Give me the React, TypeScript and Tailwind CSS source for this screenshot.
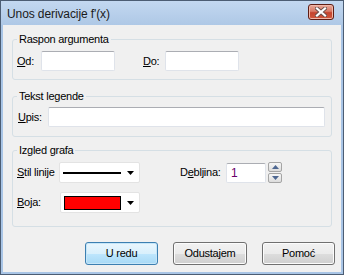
import React from 'react';

const inputCls =
  'h-[20px] bg-white border border-[#dfe3ea] border-t-[#abadb3] rounded-[2px] outline-none px-[4px] text-[11px]';

function Mn({ children }: { children: React.ReactNode }) {
  return <span className="underline underline-offset-[1px]">{children}</span>;
}

function Arrow() {
  return (
    <svg width="7" height="4" viewBox="0 0 7 4" className="shrink-0">
      <path d="M0 0h7L3.5 4z" fill="#000" />
    </svg>
  );
}

function Group({ title, h, children, className = '' }: { title: string; h: string; children: React.ReactNode; className?: string }) {
  return (
    <fieldset className={`ml-[9px] w-[320px] ${h} border border-[#d5dfe5] rounded-[3px] px-[4px] pt-[5px] ${className}`}>
      <legend className="px-[2px] leading-[14px]">{title}</legend>
      {children}
    </fieldset>
  );
}

function Button({ label, primary = false, w = 'w-[73px]' }: { label: string; primary?: boolean; w?: string }) {
  return (
    <button
      className={`${w} h-[23px] rounded-[3px] border text-[11px] text-black ${
        primary
          ? 'border-[#3c7fb1] bg-[linear-gradient(#eaf6fd_0%,#d9f0fc_50%,#bee6fd_51%,#a7d9f5_100%)] shadow-[inset_0_0_0_1px_#c6e6f8]'
          : 'border-[#707070] bg-[linear-gradient(#f2f2f2_0%,#ebebeb_50%,#dddddd_51%,#cfcfcf_100%)] shadow-[inset_0_0_0_1px_#fcfcfc]'
      }`}
    >
      {label}
    </button>
  );
}

export default function App() {
  return (
    <div className="w-[344px] h-[275px] flex flex-col border border-[#4c5d73] bg-[#a9c5e6] font-['Liberation_Sans',Arial,sans-serif] text-[11px] tracking-[-0.25px] text-black">
      {/* title bar */}
      <div className="h-[24px] shrink-0 flex items-center bg-[linear-gradient(#c3d8f0,#aec8e6)] pl-[6px] pr-[9px]">
        <span className="text-[12px] tracking-[-0.1px] text-[#1a1a1a] pt-[2px]">Unos derivacije f'(x)</span>
        <div className="ml-auto mt-[-3px] w-[26px] h-[16px] rounded-[3px] border border-[#5e1d14] bg-[linear-gradient(#e9a99a_0%,#d87a66_45%,#c4432d_55%,#d0583c_100%)] shadow-[inset_0_0_0_1px_#f0b8aa] flex items-center justify-center">
          <svg width="12" height="10" viewBox="0 0 12 10">
            <path d="M2 1.5l8 7M10 1.5l-8 7" stroke="#6b4f4a" strokeWidth="4" strokeLinecap="square" />
            <path d="M2 1.5l8 7M10 1.5l-8 7" stroke="#fff" strokeWidth="2.2" strokeLinecap="square" />
          </svg>
        </div>
      </div>

      {/* client area */}
      <div className="flex-1 mx-[2px] mb-[2px] bg-[#f0f0f0] flex flex-col">
        <Group title="Raspon argumenta" h="h-[48px]" className="mt-[7px]">
          <div className="flex items-center">
            <span className="w-[24px]"><Mn>O</Mn>d:</span>
            <input className={`${inputCls} w-[74px]`} />
            <span className="ml-[28px] w-[22px]"><Mn>D</Mn>o:</span>
            <input className={`${inputCls} w-[74px]`} />
          </div>
        </Group>

        <Group title="Tekst legende" h="h-[48px]" className="mt-[9px] !pt-[4px]">
          <div className="flex items-center">
            <span className="w-[31px] pl-[1px]"><Mn>U</Mn>pis:</span>
            <input className={`${inputCls} w-[277px]`} />
          </div>
        </Group>

        <Group title="Izgled grafa" h="h-[84px]" className="mt-[6px]">
          <div className="flex items-center">
            <span className="w-[42px]"><Mn>S</Mn>til linije</span>
            <div className="w-[81px] h-[21px] bg-white border border-[#e3e3e3] rounded-[2px] flex items-center pl-[3px] pr-[5px]">
              <div className="w-[58px] h-[2px] bg-black" />
              <div className="ml-auto"><Arrow /></div>
            </div>
            <span className="ml-[40px] w-[46px]">D<Mn>e</Mn>bljina:</span>
            <input className={`${inputCls} w-[40px] text-[#6a006a] text-[12px]`} defaultValue="1" />
            <div className="ml-[2px] flex flex-col gap-[1px]">
              <div className="w-[14px] h-[10px] border border-[#a5a5a5] rounded-[2px] bg-[linear-gradient(#f7f7f7,#dcdcdc)] flex items-center justify-center">
                <svg width="7" height="4" viewBox="0 0 7 4"><path d="M3.5 0L7 4H0z" fill="#4e6791" /></svg>
              </div>
              <div className="w-[14px] h-[10px] border border-[#a5a5a5] rounded-[2px] bg-[linear-gradient(#f7f7f7,#dcdcdc)] flex items-center justify-center">
                <svg width="7" height="4" viewBox="0 0 7 4"><path d="M0 0h7L3.5 4z" fill="#4e6791" /></svg>
              </div>
            </div>
          </div>
          <div className="flex items-center mt-[9px]">
            <span className="w-[43px]"><Mn>B</Mn>oja:</span>
            <div className="w-[80px] h-[21px] bg-white border border-[#e3e3e3] rounded-[2px] flex items-center pl-[3px] pr-[5px]">
              <div className="w-[57px] h-[14px] bg-[#ff0000] border border-black" />
              <div className="ml-auto"><Arrow /></div>
            </div>
          </div>
        </Group>

        <div className="mt-[15px] flex justify-end gap-[15px] pr-[6px]">
          <Button label="U redu" primary />
          <Button label="Odustajem" w="w-[74px]" />
          <Button label="Pomoć" />
        </div>
      </div>
    </div>
  );
}
